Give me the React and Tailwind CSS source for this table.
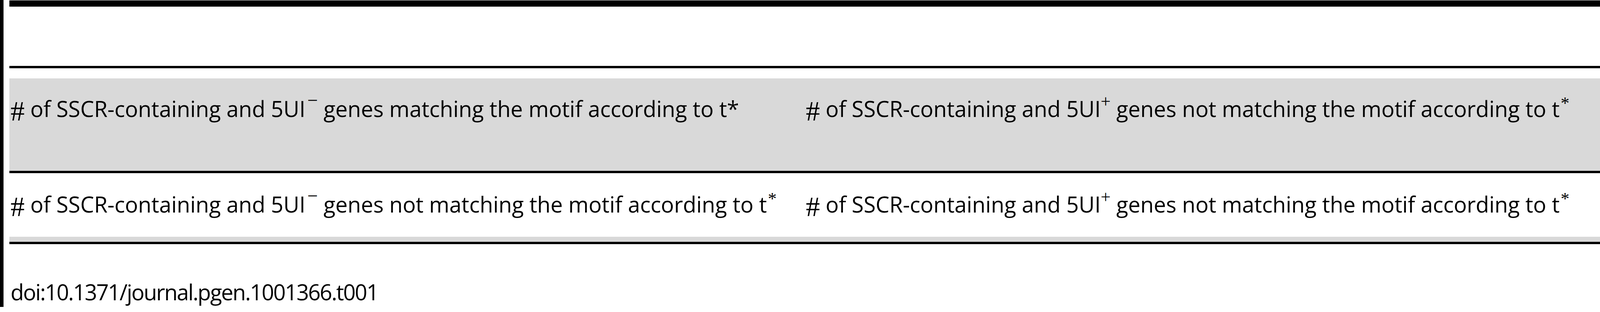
import React from "react";

function Hash() {
  return (
    <span className="relative top-[0.125em] font-['Liberation_Serif',serif] text-[1.287em] leading-none tracking-normal">#</span>
  );
}

function Sign({ plus }) {
  return plus ? (
    <span className="relative -top-[0.557em] font-['Liberation_Serif',serif] text-[0.805em] leading-none tracking-normal text-black">+</span>
  ) : (
    <span className="relative -top-[0.568em] ml-[0.108em] font-['Liberation_Serif',serif] text-[0.85em] leading-none tracking-normal text-black">−</span>
  );
}

function Star() {
  return (
    <span className="relative -top-[0.471em] ml-[0.057em] font-['Liberation_Serif',serif] text-[0.805em] leading-none tracking-normal text-black">*</span>
  );
}

function Cell({ plus, not, supStar, pt }) {
  return (
    <div className={`pl-[0.0786vw] ${pt} whitespace-nowrap text-[1.3677vw] leading-[118px] tracking-[-0.002em] text-black`}>
      <Hash /> of SSCR-containing and 5UI<Sign plus={plus} /> genes {not ? "not " : ""}matching the motif according to t
      {supStar ? <Star /> : "*"}
    </div>
  );
}

export default function App() {
  return (
    <div className="w-full h-[787px] bg-white border-l-[0.22vw] border-black pl-[0.3616vw] pt-px font-['Open_Sans',sans-serif]">
      <div className="flex flex-col">
        <div className="h-[16px] bg-black" />
        <div className="h-[152px] bg-white" />
        <div className="h-[6px] bg-black" />
        <div className="h-[26px] bg-white" />
        <div className="grid grid-cols-2 h-[237px] bg-[#d9d9d9]">
          <Cell plus={false} not={false} supStar={false} pt="pt-[18px]" />
          <Cell plus={true} not={true} supStar={true} pt="pt-[18px]" />
        </div>
        <div className="h-[6px] bg-black" />
        <div className="grid grid-cols-2 h-[163px] bg-white">
          <Cell plus={false} not={true} supStar={true} pt="pt-[20px]" />
          <Cell plus={true} not={true} supStar={true} pt="pt-[20px]" />
        </div>
        <div className="h-[13px] bg-[#d9d9d9]" />
        <div className="h-[6px] bg-black" />
        <div className="mt-[72px] pl-[0.0786vw] text-[1.3677vw] leading-[100px] tracking-[-0.04em] text-black whitespace-nowrap">
          doi:10.1371/journal.pgen.1001366.t001
        </div>
      </div>
    </div>
  );
}
